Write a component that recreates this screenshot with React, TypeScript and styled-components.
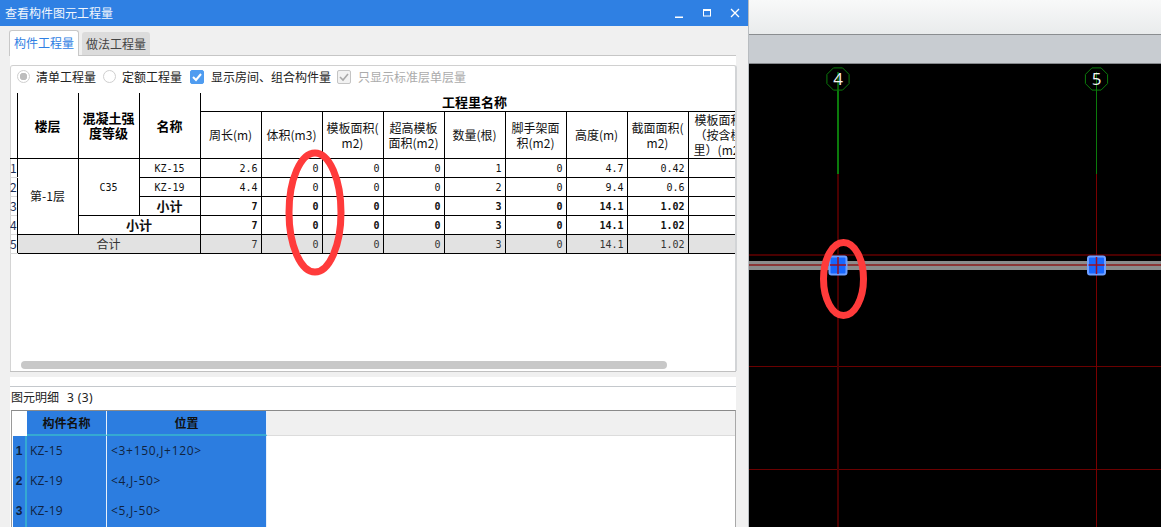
import { Fragment } from 'react';
import styled, { createGlobalStyle } from 'styled-components';

const CJK = '"Noto Sans CJK SC", "Liberation Sans", sans-serif';
const MONO = '"DejaVu Sans Mono", "Liberation Mono", "Noto Sans CJK SC", monospace';

const Global = createGlobalStyle`
  html, body { margin: 0; padding: 0; background: #000; }
  body { width: 1161px; height: 527px; overflow: hidden; font-family: ${CJK}; font-size: 12px; }
`;

const Page = styled.div`
  position: relative;
  display: flex;
  width: 1161px;
  height: 527px;
  overflow: hidden;
`;

const Win = styled.section`
  display: flex;
  flex-direction: column;
  flex: 0 0 749px;
  height: 527px;
  background: #f0f0f0;
  overflow: hidden;
`;

const TitleBar = styled.header`
  display: flex;
  align-items: center;
  flex: 0 0 26px;
  padding: 0 9px 0 5px;
  background: #2f80e3;
  color: #fff;
  line-height: 26px;
`;

const TitleText = styled.span`
  flex: 1;
  color: #f2f7fd;
`;

const WinBtn = styled.svg`
  display: block;
  width: 10px;
  height: 10px;
  margin-left: 18px;
  stroke: #fff;
  fill: none;
`;

const TabBar = styled.nav`
  display: flex;
  align-items: flex-end;
  flex: 0 0 29px;
  padding-left: 9px;
  gap: 3px;
`;

const Tab = styled.div<{ $active?: boolean }>`
  box-sizing: border-box;
  height: ${p => (p.$active ? 26 : 23)}px;
  width: ${p => (p.$active ? 70 : 68)}px;
  margin-bottom: ${p => (p.$active ? -1 : 0)}px;
  position: relative;
  text-align: center;
  line-height: 24px;
  border-radius: 3px 3px 0 0;
  color: ${p => (p.$active ? '#2f80e3' : '#444')};
  background: ${p => (p.$active ? '#fff' : '#dcdcdc')};
  border: ${p => (p.$active ? '1px solid #c8c8c8' : 'none')};
  border-bottom: none;
`;

const TopPanel = styled.div`
  display: flex;
  flex-direction: column;
  flex: 0 0 317px;
  box-sizing: border-box;
  margin: 0 13px 0 10px;
  padding-top: 9px;
  background: #fff;
  border-top: 1px solid #c6c6c6;
  border-bottom: 1px solid #c0c0c0;
`;

const QuantityBox = styled.div`
  display: flex;
  flex-direction: column;
  flex: 1;
  min-height: 0;
  border-top: 1px solid #d0d0d0;
  border-left: 1px solid #d4d4d4;
  border-right: 2px solid #d2d4d6;
  border-radius: 3px 3px 0 0;
  margin-right: -1px;
`;

const Toolbar = styled.div`
  display: flex;
  align-items: center;
  flex: 0 0 27px;
  padding-left: 6px;
  padding-bottom: 6px;
  box-sizing: border-box;
  color: #222;
`;

const Radio = styled.span<{ $checked?: boolean }>`
  box-sizing: border-box;
  width: 13px;
  height: 13px;
  margin-right: 6px;
  border-radius: 50%;
  border: 1px solid #cfcfcf;
  background: ${p => (p.$checked ? 'radial-gradient(circle, #bdbdbd 0 3.5px, #fff 4px)' : '#fff')};
`;

const Check = styled.span<{ $disabled?: boolean }>`
  display: flex;
  align-items: center;
  justify-content: center;
  box-sizing: border-box;
  width: 14px;
  height: 14px;
  margin-right: 7px;
  border-radius: 2px;
  background: ${p => (p.$disabled ? '#f2f2f2' : '#4f9cf0')};
  border: 1px solid ${p => (p.$disabled ? '#c4c4c4' : '#4f9cf0')};
`;

const Opt = styled.span<{ $muted?: boolean; $gap?: number }>`
  margin-right: ${p => p.$gap ?? 0}px;
  color: ${p => (p.$muted ? '#ababab' : '#222')};
  white-space: nowrap;
`;

const TableClip = styled.div`
  flex: 1;
  min-height: 0;
  overflow: hidden;
  margin-left: -1px;
`;

const QtyTable = styled.table`
  table-layout: fixed;
  border-collapse: collapse;
  width: 739px;
  color: #111;
`;

const Th = styled.th<{ $noTop?: boolean }>`
  padding: 0;
  font-family: ${CJK};
  font-size: 12px;
  font-weight: 400;
  line-height: 15px;
  text-align: center;
  vertical-align: middle;
  white-space: nowrap;
  overflow: hidden;
  border: 1px solid #000;
  ${p => (p.$noTop ? 'border-top: none;' : '')}
`;

const BoldTh = styled(Th)`
  font-size: 13px;
  font-weight: 700;
  line-height: 15px;
  color: #000;
`;

const RowNum = styled.td`
  padding: 0;
  font-size: 12px;
  line-height: 14px;
  color: #1b2f55;
  border-right: 1px solid #000;
  border-bottom: 1px solid #d8d8d8;
  text-align: right;
  overflow: hidden;
`;

const RowNumHead = styled.th`
  padding: 0;
  border-right: 1px solid #000;
  border-bottom: 1px solid #000;
`;

const Td = styled.td<{ $center?: boolean; $bold?: boolean; $mono?: boolean; $total?: boolean }>`
  height: ${p => (p.$mono ? 16 : 18)}px;
  padding: ${p => (p.$mono ? 2 : 0)}px ${p => (p.$center ? 0 : 3)}px 0 0;
  font-family: ${p => (p.$mono ? MONO : CJK)};
  font-size: ${p => (p.$mono ? 10 : p.$bold ? 13 : 12)}px;
  font-weight: ${p => (p.$bold ? 700 : 400)};
  line-height: 14px;
  text-align: ${p => (p.$center ? 'center' : 'right')};
  white-space: nowrap;
  border: 1px solid #000;
  background: ${p => (p.$total ? '#e2e2e2' : '#fff')};
  color: ${p => (p.$total ? '#333' : '#111')};
`;

const Scroller = styled.div`
  flex: 0 0 16px;
  box-sizing: border-box;
  padding: 6px 0 0 10px;
`;

const Thumb = styled.div`
  width: 646px;
  height: 8px;
  border-radius: 4px;
  background: #c8c8c8;
`;

const Gap = styled.div`
  flex: 0 0 5px;
`;

const BottomPanel = styled.div`
  flex: 1;
  min-height: 0;
  margin: 0 13px 0 10px;
  padding-top: 9px;
  background: #fff;
`;

const DetailBox = styled.div`
  height: 100%;
  border-top: 1px solid #c4c8cc;
  overflow: hidden;
`;

const Caption = styled.div`
  height: 23px;
  padding-left: 1px;
  line-height: 20px;
  color: #222;
  white-space: nowrap;
  & > b {
    font-family: "Noto Sans", sans-serif;
    font-weight: 400;
    margin-left: 8px;
    letter-spacing: 0.4px;
  }
`;

const Grid = styled.div`
  box-sizing: border-box;
  margin-left: 1px;
  padding-left: 1px;
  border-top: 1px solid #8a8a8a;
  border-left: 1px solid #9a9a9a;
  border-right: 1px solid #a8a8a8;
  height: 200px;
`;

const GridHead = styled.div`
  display: grid;
  grid-template-columns: 14px 80px 160px 1fr;
  height: 25px;
  background: #f0f0f0;
  border-bottom: 1px solid #dcdcdc;
  box-sizing: border-box;
`;

const Corner = styled.div`
  background: #fff;
`;

const HeadCell = styled.div`
  box-sizing: border-box;
  background: #2c7de0;
  border-right: 1px solid #e8f0fa;
  border-bottom: 2px solid #35a9d2;
  text-align: center;
  font-weight: 700;
  line-height: 23px;
  color: #111;
`;

const GridRow = styled.div`
  display: grid;
  grid-template-columns: 14px 80px 160px;
  height: 30px;
`;

const RowHead = styled.div`
  box-sizing: border-box;
  background: #2c7de0;
  border-right: 2px solid #35a9d2;
  border-bottom: 1px solid #2c7de0;
  font-family: "Liberation Sans", sans-serif;
  font-weight: 700;
  font-size: 12px;
  line-height: 31px;
  text-align: center;
  color: #10233f;
`;

const GridCell = styled.div<{ $spread?: boolean }>`
  box-sizing: border-box;
  padding-left: ${p => (p.$spread ? 4 : 3)}px;
  background: #2c7de0;
  border-right: 1px solid #e8f0fa;
  border-bottom: 1px solid #e8f0fa;
  font-family: "Open Sans", "Liberation Sans", sans-serif;
  font-size: 12px;
  letter-spacing: ${p => (p.$spread ? 0.7 : 0.2)}px;
  line-height: 29px;
  color: #10233f;
  white-space: nowrap;
`;

const Viewport = styled.section`
  display: flex;
  flex-direction: column;
  flex: 1;
  min-width: 0;
  border-left: 1px solid #b8bcc0;
  margin-left: -1px;
`;

const Ribbon = styled.div`
  flex: 0 0 35px;
  box-sizing: border-box;
  background: linear-gradient(#f8f9f9, #e9ebec);
  border-bottom: 1px solid #8a8d90;
`;

const Strip = styled.div`
  flex: 0 0 29px;
  box-sizing: border-box;
  background: #c8ccd1;
  border-bottom: 1px solid #85888c;
`;

const Drawing = styled.svg`
  display: block;
  flex: 1;
  width: 100%;
  background: #000;
`;

const Markup = styled.svg<{ $left: number; $top: number; $w: number; $h: number }>`
  position: absolute;
  left: ${p => p.$left}px;
  top: ${p => p.$top}px;
  width: ${p => p.$w}px;
  height: ${p => p.$h}px;
  fill: none;
  stroke: #ff3b3b;
  stroke-width: 7;
  pointer-events: none;
`;

const HEADS: string[][] = [
  ['周长(m)'],
  ['体积(m3)'],
  ['模板面积(', 'm2)'],
  ['超高模板', '面积(m2)'],
  ['数量(根)'],
  ['脚手架面', '积(m2)'],
  ['高度(m)'],
  ['截面面积(', 'm2)'],
  ['模板面积', '（按含模', '里）(m2)'],
];

const FIRST = ['2.6', '0', '0', '0', '1', '0', '4.7', '0.42', ''];
const SECOND = ['4.4', '0', '0', '0', '2', '0', '9.4', '0.6', ''];
const SUM = ['7', '0', '0', '0', '3', '0', '14.1', '1.02', ''];

const DETAILS = [
  ['1', 'KZ-15', '<3+150,J+120>'],
  ['2', 'KZ-19', '<4,J-50>'],
  ['3', 'KZ-19', '<5,J-50>'],
];

// axis number balloons and the beam band on the black canvas (y is page y - 64)
function Axis({ x, label, heavy }: { x: number; label: string; heavy?: boolean }) {
  const pts = Array.from({ length: 8 }, (_, i) => {
    const a = (Math.PI / 4) * i + Math.PI / 8;
    return `${x + 12 * Math.cos(a)},${15 + 12 * Math.sin(a)}`;
  }).join(' ');
  return (
    <g>
      <polygon points={pts} fill="none" stroke="#0b7a0b" strokeWidth="1" />
      <line x1={x} y1="27" x2={x} y2="110" stroke="#0b7a0b" strokeWidth={heavy ? 2 : 1} />
      <line x1={x} y1="8" x2={x} y2="27" stroke="#0b7a0b" strokeWidth={heavy ? 1.5 : 1} />
      <line x1={x} y1="110" x2={x} y2="463" stroke={heavy ? '#4a0000' : '#7a0000'} strokeWidth={heavy ? 2 : 1} />
      <text x={x} y="21" textAnchor="middle" fontFamily="'Open Sans', sans-serif" fontSize="17" fill="#f4f4f4">
        {label}
      </text>
    </g>
  );
}

function Column({ x }: { x: number }) {
  return (
    <g>
      <rect x={x - 8.5} y="192.5" width="17" height="18" rx="2" fill="#1767ff" stroke="#6f9fff" strokeWidth="2" />
      <line x1={x} y1="193" x2={x} y2="210" stroke="#9a0f24" strokeWidth="1.5" />
      <line x1={x - 8} y1="201" x2={x + 8} y2="201" stroke="#9a0f24" strokeWidth="1.5" />
    </g>
  );
}

export default function App() {
  return (
    <Page>
      <Global />
      <Win>
        <TitleBar>
          <TitleText>查看构件图元工程量</TitleText>
          <WinBtn viewBox="0 0 10 10">
            <line x1="1" y1="9.5" x2="9" y2="9.5" strokeWidth="2" />
          </WinBtn>
          <WinBtn viewBox="0 0 10 10">
            <rect x="1.5" y="2" width="7" height="6" strokeWidth="1" />
            <line x1="1" y1="2" x2="9" y2="2" strokeWidth="2" />
          </WinBtn>
          <WinBtn viewBox="0 0 10 10">
            <path d="M1 1l8 8M9 1l-8 8" strokeWidth="1.3" />
          </WinBtn>
        </TitleBar>

        <TabBar>
          <Tab $active>构件工程量</Tab>
          <Tab>做法工程量</Tab>
        </TabBar>

        <TopPanel>
          <QuantityBox>
            <Toolbar>
              <Radio $checked />
              <Opt $gap={7}>清单工程量</Opt>
              <Radio />
              <Opt $gap={8}>定额工程量</Opt>
              <Check>
                <svg width="10" height="10" viewBox="0 0 10 10" fill="none" stroke="#fff" strokeWidth="2">
                  <path d="M1 5l3 3 5-6" />
                </svg>
              </Check>
              <Opt $gap={6}>显示房间、组合构件量</Opt>
              <Check $disabled>
                <svg width="10" height="10" viewBox="0 0 10 10" fill="none" stroke="#a8a8a8" strokeWidth="1.6">
                  <path d="M1 5l3 3 5-6" />
                </svg>
              </Check>
              <Opt $muted>只显示标准层单层量</Opt>
            </Toolbar>

            <TableClip>
              <QtyTable>
                <colgroup>
                  <col style={{ width: 7 }} />
                  {Array.from({ length: 12 }, (_, i) => (
                    <col key={i} style={{ width: 61 }} />
                  ))}
                </colgroup>
                <thead>
                  <tr style={{ height: 18 }}>
                    <RowNumHead rowSpan={2} />
                    <BoldTh rowSpan={2} $noTop>楼层</BoldTh>
                    <BoldTh rowSpan={2} $noTop>混凝土强<br />度等级</BoldTh>
                    <BoldTh rowSpan={2} $noTop>名称</BoldTh>
                    <BoldTh colSpan={9} $noTop>工程里名称</BoldTh>
                  </tr>
                  <tr style={{ height: 47 }}>
                    {HEADS.map((lines, i) => (
                      <Th key={i}>
                        {lines.map((line, j) => (
                          <Fragment key={j}>
                            {j > 0 && <br />}
                            {line}
                          </Fragment>
                        ))}
                      </Th>
                    ))}
                  </tr>
                </thead>
                <tbody>
                  <tr>
                    <RowNum>1</RowNum>
                    <Td $center rowSpan={4}>第-1层</Td>
                    <Td $center $mono rowSpan={3}>C35</Td>
                    <Td $center $mono>KZ-15</Td>
                    {FIRST.map((v, i) => <Td key={i} $mono>{v}</Td>)}
                  </tr>
                  <tr>
                    <RowNum>2</RowNum>
                    <Td $center $mono>KZ-19</Td>
                    {SECOND.map((v, i) => <Td key={i} $mono>{v}</Td>)}
                  </tr>
                  <tr>
                    <RowNum>3</RowNum>
                    <Td $center $bold>小计</Td>
                    {SUM.map((v, i) => <Td key={i} $mono $bold>{v}</Td>)}
                  </tr>
                  <tr>
                    <RowNum>4</RowNum>
                    <Td $center $bold colSpan={2}>小计</Td>
                    {SUM.map((v, i) => <Td key={i} $mono $bold>{v}</Td>)}
                  </tr>
                  <tr>
                    <RowNum>5</RowNum>
                    <Td $center $total colSpan={3}>合计</Td>
                    {SUM.map((v, i) => <Td key={i} $mono $total>{v}</Td>)}
                  </tr>
                </tbody>
              </QtyTable>
            </TableClip>

            <Scroller>
              <Thumb />
            </Scroller>
          </QuantityBox>
        </TopPanel>

        <Gap />

        <BottomPanel>
          <DetailBox>
            <Caption>
              图元明细<b>3 (3)</b>
            </Caption>
            <Grid>
              <GridHead>
                <Corner />
                <HeadCell>构件名称</HeadCell>
                <HeadCell>位置</HeadCell>
              </GridHead>
              {DETAILS.map(([n, name, pos]) => (
                <GridRow key={n}>
                  <RowHead>{n}</RowHead>
                  <GridCell>{name}</GridCell>
                  <GridCell $spread>{pos}</GridCell>
                </GridRow>
              ))}
            </Grid>
          </DetailBox>
        </BottomPanel>
      </Win>

      <Viewport>
        <Ribbon />
        <Strip />
        <Drawing viewBox="0 0 412 463">
          <rect x="0" y="197" width="412" height="9" fill="#8c8c8c" />
          <line x1="0" y1="191" x2="412" y2="191" stroke="#4a0000" strokeWidth="2" />
          <line x1="0" y1="201" x2="412" y2="201" stroke="#8b1a1a" strokeWidth="1.5" />
          <line x1="0" y1="302.5" x2="412" y2="302.5" stroke="#6a0000" strokeWidth="1" />
          <line x1="0" y1="405.5" x2="412" y2="405.5" stroke="#6a0000" strokeWidth="1" />
          <Axis x={89} label="4" heavy />
          <Axis x={347.5} label="5" />
          <Column x={89} />
          <Column x={347.5} />
        </Drawing>
      </Viewport>

      <Markup $left={284} $top={148} $w={62} $h={129} viewBox="0 0 62 129">
        <ellipse cx="31" cy="64.5" rx="26" ry="59.5" />
      </Markup>
      <Markup $left={818} $top={237} $w={51} $h={84} viewBox="0 0 51 84">
        <ellipse cx="25.5" cy="42" rx="20" ry="36.5" />
      </Markup>
    </Page>
  );
}
